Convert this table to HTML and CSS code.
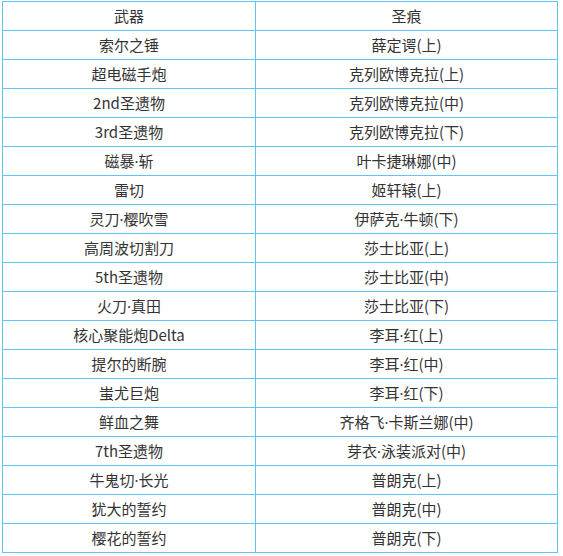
FILE: index.html
```html
<!DOCTYPE html>
<html lang="zh">
<head>
<meta charset="utf-8">
<link rel="stylesheet" href="styles.css">
</head>
<body>
<table class="tbl">
<thead>
<tr><th class="c1">武器</th><th class="c2">圣痕</th></tr>
</thead>
<tbody>
<tr><td>索尔之锤</td><td>薛定谔(上)</td></tr>
<tr><td>超电磁手炮</td><td>克列欧博克拉(上)</td></tr>
<tr><td>2nd圣遗物</td><td>克列欧博克拉(中)</td></tr>
<tr><td>3rd圣遗物</td><td>克列欧博克拉(下)</td></tr>
<tr><td>磁暴<span class="dot">·</span>斩</td><td>叶卡捷琳娜(中)</td></tr>
<tr><td>雷切</td><td>姬轩辕(上)</td></tr>
<tr><td>灵刀<span class="dot">·</span>樱吹雪</td><td>伊萨克<span class="dot">·</span>牛顿(下)</td></tr>
<tr><td>高周波切割刀</td><td>莎士比亚(上)</td></tr>
<tr><td>5th圣遗物</td><td>莎士比亚(中)</td></tr>
<tr><td>火刀<span class="dot">·</span>真田</td><td>莎士比亚(下)</td></tr>
<tr><td>核心聚能炮Delta</td><td>李耳<span class="dot">·</span>红(上)</td></tr>
<tr><td>提尔的断腕</td><td>李耳<span class="dot">·</span>红(中)</td></tr>
<tr><td>蚩尤巨炮</td><td>李耳<span class="dot">·</span>红(下)</td></tr>
<tr><td>鲜血之舞</td><td>齐格飞<span class="dot">·</span>卡斯兰娜(中)</td></tr>
<tr><td>7th圣遗物</td><td>芽衣<span class="dot">·</span>泳装派对(中)</td></tr>
<tr><td>牛鬼切<span class="dot">·</span>长光</td><td>普朗克(上)</td></tr>
<tr><td>犹大的誓约</td><td>普朗克(中)</td></tr>
<tr><td>樱花的誓约</td><td>普朗克(下)</td></tr>
</tbody>
</table>
</body>
</html>
```
FILE: styles.css
```css
html, body {
  margin: 0;
  padding: 0;
  background: #ffffff;
}
body {
  padding: 1px 0 0 2px;
  font-family: "Microsoft YaHei", "Noto Sans CJK SC", sans-serif;
  font-size: 15px;
  color: #333333;
}
.tbl {
  border-collapse: collapse;
  table-layout: fixed;
  width: 555px;
}
.tbl th, .tbl td {
  border: 1px solid #5ec5fa;
  height: 28px;
  padding: 0;
  text-align: center;
  vertical-align: middle;
  font-weight: normal;
  line-height: 28px;
  box-sizing: border-box;
}
.c1 { width: 253px; }
.c2 { width: 302px; }
.dot {
  font-family: "Noto Sans", "Liberation Sans", sans-serif;
}
```
